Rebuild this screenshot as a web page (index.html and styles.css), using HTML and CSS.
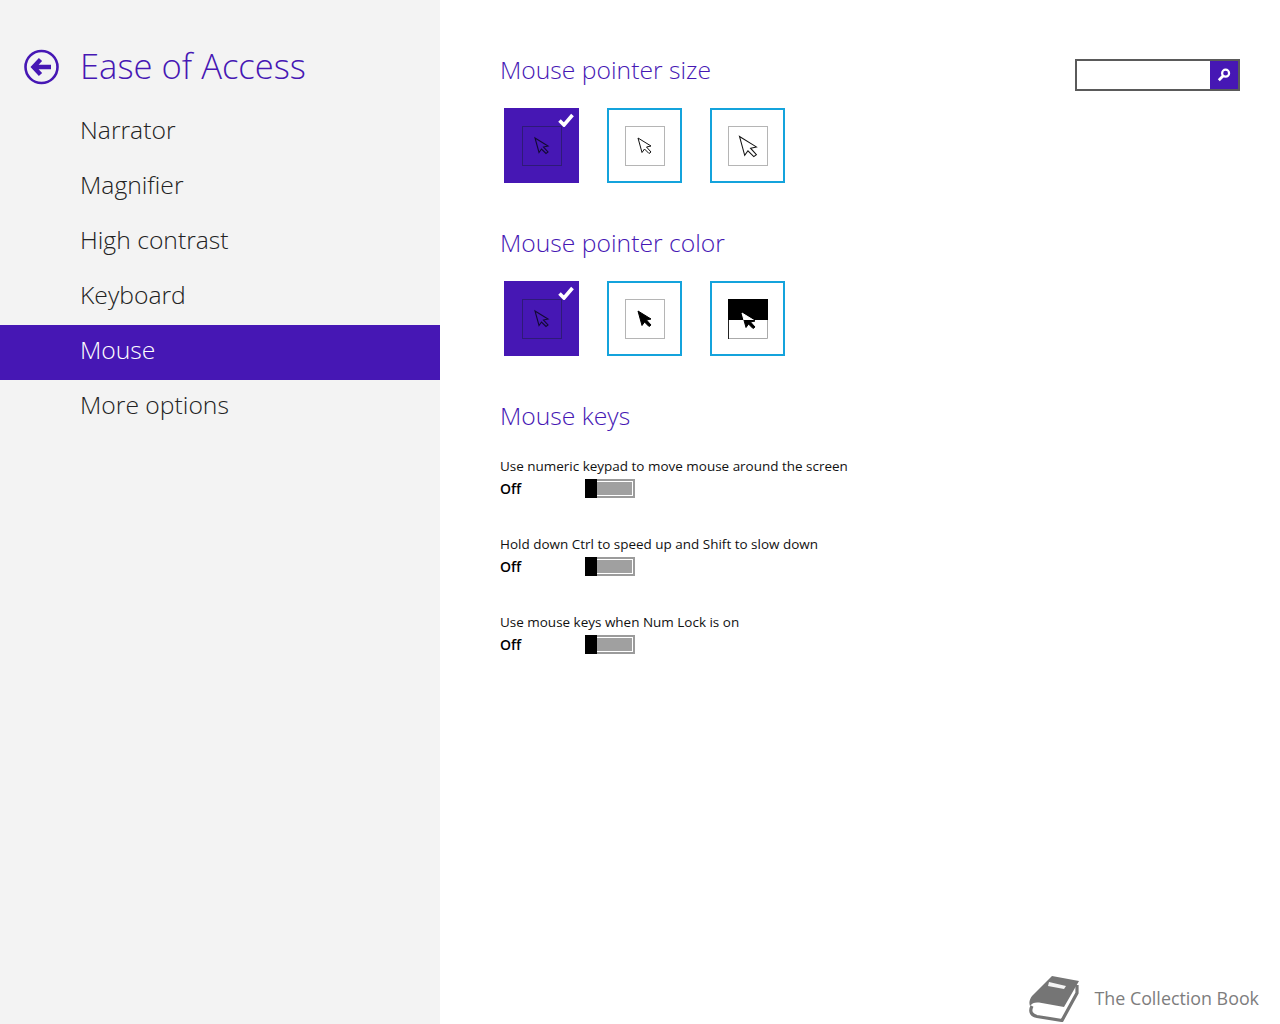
FILE: index.html
```html
<!DOCTYPE html>
<html lang="en">
<head>
<meta charset="utf-8">
<title>Ease of Access</title>
<link rel="stylesheet" href="styles.css">
</head>
<body>
<svg class="defs" width="0" height="0" aria-hidden="true">
  <defs>
    <path id="ptr" d="M0 0 L13 8 L8.5 9 L13 14 L11 15.5 L6.5 11 L4 14.5 Z"/>
    <clipPath id="top-half"><rect x="0" y="0" width="40" height="21"/></clipPath>
    <clipPath id="bottom-half"><rect x="0" y="21" width="40" height="19"/></clipPath>
  </defs>
</svg>
<div class="app">
  <aside class="sidebar">
    <header class="side-head">
      <svg class="back" width="36" height="36" viewBox="0 0 36 36">
        <circle cx="17.5" cy="18" r="16" fill="none" stroke="#4617b4" stroke-width="2.6"/>
        <path d="M16.5 10.5 L9.5 18 L16.5 25.5 M10.5 18 H27" fill="none" stroke="#4617b4" stroke-width="4.4"/>
      </svg>
      <h1 class="side-title">Ease of Access</h1>
    </header>
    <nav class="nav">
      <a class="nav-item">Narrator</a>
      <a class="nav-item">Magnifier</a>
      <a class="nav-item">High contrast</a>
      <a class="nav-item">Keyboard</a>
      <a class="nav-item active">Mouse</a>
      <a class="nav-item">More options</a>
    </nav>
  </aside>
  <main class="main">
    <div class="content">
      <h2 class="heading first">Mouse pointer size</h2>
      <div class="options">
        <div class="opt selected">
          <div class="well"><svg class="p" width="40" height="40" viewBox="0 0 40 40"><use href="#ptr" transform="translate(13 12)" fill="none" stroke="#120a33" stroke-width="1.1"/></svg></div>
          <svg class="check" width="16" height="14" viewBox="0 0 16 14"><path d="M1.5 7.5 L6 12 L14.5 2" fill="none" stroke="#fff" stroke-width="3.6"/></svg>
        </div>
        <div class="opt">
          <div class="well"><svg class="p" width="40" height="40" viewBox="0 0 40 40"><use href="#ptr" transform="translate(13 12)" fill="#fff" stroke="#111" stroke-width="1"/></svg></div>
        </div>
        <div class="opt">
          <div class="well"><svg class="p" width="40" height="40" viewBox="0 0 40 40"><use href="#ptr" transform="translate(11.5 10.5) scale(1.3)" fill="#fff" stroke="#111" stroke-width=".8"/></svg></div>
        </div>
      </div>

      <h2 class="heading">Mouse pointer color</h2>
      <div class="options">
        <div class="opt selected">
          <div class="well"><svg class="p" width="40" height="40" viewBox="0 0 40 40"><use href="#ptr" transform="translate(13 12)" fill="none" stroke="#120a33" stroke-width="1.1"/></svg></div>
          <svg class="check" width="16" height="14" viewBox="0 0 16 14"><path d="M1.5 7.5 L6 12 L14.5 2" fill="none" stroke="#fff" stroke-width="3.6"/></svg>
        </div>
        <div class="opt">
          <div class="well"><svg class="p" width="40" height="40" viewBox="0 0 40 40"><use href="#ptr" transform="translate(13 12)" fill="#000" stroke="#000" stroke-width="1"/></svg></div>
        </div>
        <div class="opt">
          <div class="well inverted">
            <svg class="p" width="40" height="40" viewBox="0 0 40 40">
              <rect x="0" y="0" width="40" height="21" fill="#000"/>
              <path d="M.5 21 V39.5 H39.5 V21" fill="none" stroke="#aaa"/>
              <path d="M.5 21 V40" stroke="#222"/>
              <g clip-path="url(#top-half)"><use href="#ptr" transform="translate(14 14)" fill="#fff" stroke="#fff" stroke-width="1"/></g>
              <g clip-path="url(#bottom-half)"><use href="#ptr" transform="translate(14 14)" fill="#000" stroke="#000" stroke-width="1"/></g>
            </svg>
          </div>
        </div>
      </div>

      <h2 class="heading">Mouse keys</h2>
      <div class="settings">
        <div class="setting">
          <div class="label">Use numeric keypad to move mouse around the screen</div>
          <div class="toggle-row"><span class="state">Off</span><span class="toggle"><span class="thumb"></span></span></div>
        </div>
        <div class="setting">
          <div class="label">Hold down Ctrl to speed up and Shift to slow down</div>
          <div class="toggle-row"><span class="state">Off</span><span class="toggle"><span class="thumb"></span></span></div>
        </div>
        <div class="setting">
          <div class="label">Use mouse keys when Num Lock is on</div>
          <div class="toggle-row"><span class="state">Off</span><span class="toggle"><span class="thumb"></span></span></div>
        </div>
      </div>
    </div>
    <div class="search">
      <div class="search-input"></div>
      <div class="search-btn">
        <svg width="14" height="14" viewBox="0 0 14 14"><circle cx="8.6" cy="5.2" r="3.5" fill="none" stroke="#fff" stroke-width="2.2"/><path d="M6 8 L1.8 12.2" stroke="#fff" stroke-width="2.8"/></svg>
      </div>
    </div>
  </main>
</div>
<div class="watermark">
  <svg width="52" height="46" viewBox="0 0 52 46">
    <path d="M23 0 L50 5 L35 31 L10 26.5 C6 26 3 27 1 30 C-.5 26 1 23 3 20 Z" fill="#757575"/>
    <path d="M3 30 C0 36 3 39.5 8 40.5 L33 44.5 L48 17 L48 9" fill="none" stroke="#757575" stroke-width="3.2"/>
    <path d="M20 6 L37 10 L35 13 L19 10 Z" fill="#f4f4f4"/>
  </svg>
  <span class="wm-text">The Collection Book</span>
</div>
</body>
</html>
```
FILE: styles.css
```css
* { box-sizing: border-box; }
html, body { margin: 0; padding: 0; height: 100%; }
body {
  background: #fff;
  font-family: "Open Sans", "Noto Sans", sans-serif;
  color: #000;
  overflow: hidden;
  position: relative;
}
.defs { position: absolute; }
.app { display: flex; height: 1024px; }

.sidebar { width: 440px; flex: none; background: #f3f3f3; }
.side-head { display: flex; align-items: center; height: 105px; padding: 28px 0 0 24px; gap: 20px; }
.back { flex: none; }
.side-title { margin: 0; font-size: 34.6px; font-weight: 300; color: #4617b4; line-height: 1; }
.nav { display: flex; flex-direction: column; }
.nav-item {
  height: 55px;
  padding-left: 80px;
  font-size: 24.7px;
  font-weight: 300;
  line-height: 50px;
  color: #222;
}
.nav-item.active { background: #4617b4; color: #fff; }

.main { flex: 1; display: flex; justify-content: space-between; align-items: flex-start; padding: 0 40px 0 60px; }
.content { display: flex; flex-direction: column; }
.heading { margin: 44px 0 20px; font-size: 24.7px; font-weight: 300; color: #4617b4; line-height: 32px; height: 34px; white-space: nowrap; }
.heading.first { margin-top: 54px; }
.options { display: flex; gap: 28px; padding-left: 4px; }
.opt { position: relative; width: 75px; height: 75px; border: 2px solid #14a3dc; display: flex; align-items: center; justify-content: center; background: #fff; }
.opt.selected { background: #4617b4; border-color: #4617b4; }
.well { width: 40px; height: 40px; border: 1px solid #b5b5b5; position: relative; }
.selected .well { border-color: #2f1a78; }
.well.inverted { border: 0; }
.p { display: block; margin: -1px; }
.inverted .p { margin: 0; }
.check { position: absolute; top: 3px; right: 3px; }

.settings { display: flex; flex-direction: column; gap: 34px; margin-top: 1px; }
.label { font-size: 13.47px; line-height: 22px; height: 22px; color: #111; white-space: nowrap; }
.toggle-row { display: flex; align-items: center; height: 22px; }
.state { width: 85px; font-size: 14px; font-weight: 600; line-height: 22px; padding-top: 1px; height: 22px; }
.toggle { width: 50px; height: 19px; border: 2px solid #9b9b9b; background: #a0a0a0; box-shadow: inset 0 0 0 1px #fff; display: block; position: relative; }
.thumb { position: absolute; left: -2px; top: -2px; width: 12px; height: 19px; background: #000; }

.search { margin-top: 59px; width: 165px; height: 32px; display: flex; border: 2px solid #5a5a5a; flex: none; background: #fff; }
.search-input { flex: 1; }
.search-btn { width: 28px; background: #4617b4; display: flex; align-items: center; justify-content: center; }

.watermark { position: absolute; right: 21px; bottom: 2px; display: flex; align-items: center; gap: 13px; height: 47px; }
.wm-text { font-size: 17.85px; font-weight: 400; color: #7d7d7d; line-height: 1; margin-top: 0; }
```
